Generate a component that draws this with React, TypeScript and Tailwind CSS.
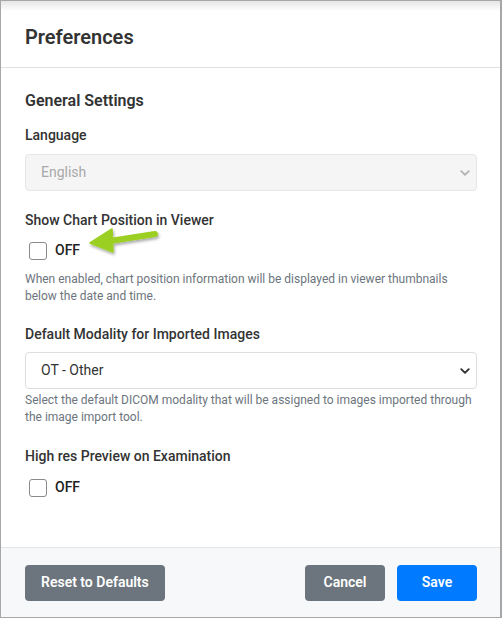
import React from 'react';

function Chevron({ color }: { color: string }) {
  return (
    <svg width="10" height="10" viewBox="0 0 16 16" className="shrink-0">
      <path d="M2 5l6 6 6-6" fill="none" stroke={color} strokeWidth="3" strokeLinecap="round" strokeLinejoin="round" />
    </svg>
  );
}

function Toggle() {
  return (
    <div className="flex items-center gap-[8px] pl-[4px]">
      <span className="block w-[18px] h-[18px] rounded-[3px] border border-[#8a8a8a] bg-white" />
      <span className="text-[14px] font-medium text-[#222]">OFF</span>
    </div>
  );
}

export default function App() {
  return (
    <div className="w-[502px] h-[618px] bg-white border border-[#a7a7a7] border-r-2 flex flex-col relative" style={{ fontFamily: 'Roboto, "Liberation Sans", sans-serif' }}>
      <div className="absolute inset-x-0 top-0 h-[10px] bg-gradient-to-b from-[#e6e6e6] to-white pointer-events-none" />
      <div className="h-[67px] shrink-0 border-b border-[#dee2e6] flex items-center pl-[24px] pr-[23px] pt-[6px] relative">
        <h1 className="text-[20px] font-semibold text-[#333]">Preferences</h1>
      </div>

      <div className="flex-1 pl-[24px] pr-[23px] pt-[22px] text-[#333]">
        <h2 className="text-[16px] font-semibold leading-[22px] text-[#333]">General Settings</h2>

        <div className="mt-[13px] text-[14px] leading-[20px] font-medium">Language</div>
        <div className="mt-[9px] h-[37px] rounded-[4px] border border-[#e4e6e8] bg-[#f5f5f5] flex items-center justify-between pl-[15px] pr-[6px]">
          <span className="text-[14px] text-[#a9a9a9]">English</span>
          <Chevron color="#b4b4b4" />
        </div>

        <div className="mt-[19px] text-[14px] leading-[20px] font-medium">Show Chart Position in Viewer</div>
        <div className="mt-[10px] relative">
          <Toggle />
          <svg className="absolute left-[60px] top-[-18px]" width="104" height="40" viewBox="0 0 104 40">
            <defs>
              <filter id="sh" x="-20%" y="-40%" width="140%" height="180%">
                <feDropShadow dx="1" dy="2" stdDeviation="1.6" floodColor="#000" floodOpacity="0.35" />
              </filter>
            </defs>
            <g filter="url(#sh)">
              <line x1="25" y1="19" x2="70" y2="12" stroke="#9bcf22" strokeWidth="6" strokeLinecap="round" />
              <path d="M5 21 L27 7 L28 30 Z" fill="#9bcf22" stroke="#9bcf22" strokeWidth="1.5" strokeLinejoin="round" />
            </g>
          </svg>
        </div>
        <p className="mt-[10px] text-[12px] leading-[17px] text-[#6c757d]">
          When enabled, chart position information will be displayed in viewer thumbnails below the date and time.
        </p>

        <div className="mt-[19px] text-[14px] leading-[20px] font-medium">Default Modality for Imported Images</div>
        <div className="mt-[8px] h-[37px] rounded-[4px] border border-[#dcdfe2] bg-white flex items-center justify-between pl-[15px] pr-[6px]">
          <span className="text-[14px] text-[#333]">OT - Other</span>
          <Chevron color="#333" />
        </div>
        <p className="mt-[3px] text-[12px] leading-[17px] text-[#6c757d]">
          Select the default DICOM modality that will be assigned to images imported through the image import tool.
        </p>

        <div className="mt-[20px] text-[14px] leading-[20px] font-medium">High res Preview on Examination</div>
        <div className="mt-[11px]">
          <Toggle />
        </div>
      </div>

      <div className="h-[70px] shrink-0 border-t border-[#e3e5e8] bg-[#f7f8fa] flex items-center pl-[24px] pr-[23px] gap-[12px]">
        <button type="button" className="h-[36px] px-[16px] rounded-[4px] bg-[#6c757d] text-white text-[14px] font-semibold">Reset to Defaults</button>
        <div className="flex-1" />
        <button type="button" className="h-[36px] w-[80px] rounded-[4px] bg-[#6c757d] text-white text-[14px] font-semibold">Cancel</button>
        <button type="button" className="h-[36px] w-[80px] rounded-[4px] bg-[#007bff] text-white text-[14px] font-semibold">Save</button>
      </div>
    </div>
  );
}
